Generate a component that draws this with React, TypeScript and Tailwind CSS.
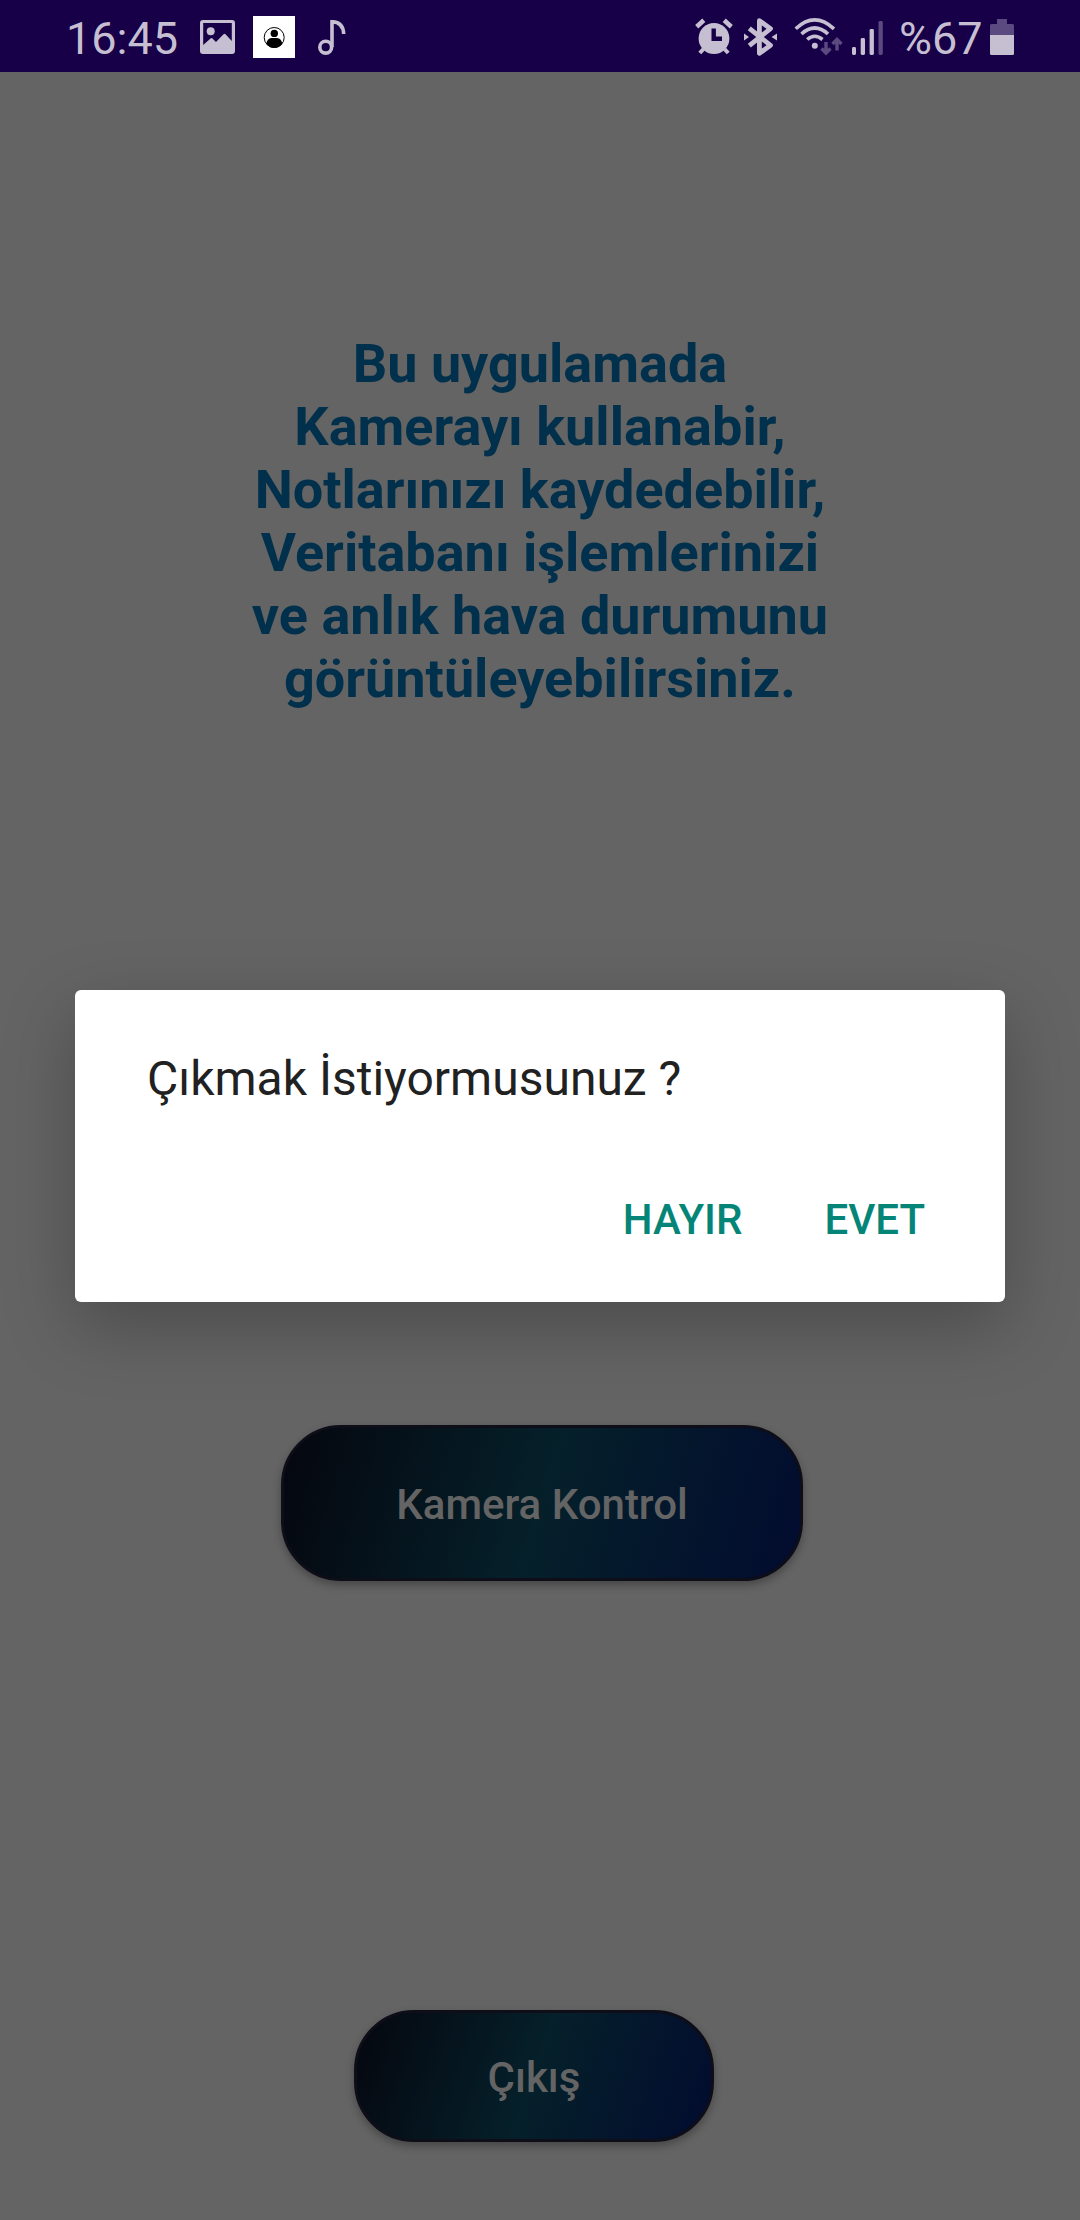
const LIGHT = '#c5bfd1';
const DIM = '#5b4a80';

function PictureIcon() {
  return (
    <svg className="ml-[23px] mt-5 h-[34px] w-[35px]" viewBox="0 0 35 34" aria-hidden="true">
      <path
        fill={LIGHT}
        fillRule="evenodd"
        d="M3 0H32Q35 0 35 3V31Q35 34 32 34H3Q0 34 0 31V3Q0 0 3 0ZM3.2 3V25L10.5 18.5Q11.5 17.6 12.5 18.5L16 22L23.5 14.2Q24.5 13.2 25.5 14.2L31.8 21V3Z"
      />
      <circle cx="10.7" cy="11.2" r="4" fill={LIGHT} />
    </svg>
  );
}

function PersonIcon() {
  return (
    <svg className="ml-[18px] mt-4 size-[42px]" viewBox="0 0 42 42" aria-hidden="true">
      <path fill="#fff" d="M0 0H42V42H0Z" />
      <circle cx="21.2" cy="21.5" r="10" fill="#fff" stroke="#000" strokeWidth="1" />
      <circle cx="21.3" cy="17.4" r="3.7" />
      <path d="M13.3 28Q14 22.5 18.5 22H24Q28.6 22.5 29.3 28Q26 32 21.3 32T13.3 28Z" />
    </svg>
  );
}

function NoteIcon() {
  return (
    <svg className="ml-[23px] mt-5 h-[35px] w-[28px]" viewBox="0 0 28 35" fill="none" stroke={LIGHT} aria-hidden="true">
      <circle cx="7.7" cy="27.2" r="5.9" strokeWidth="3.6" />
      <path d="M14 27V1.7Q25.2 2 25.7 14" strokeWidth="3.6" />
    </svg>
  );
}

function AlarmIcon() {
  return (
    <svg className="ml-auto mt-[18px] h-[37px] w-[38px]" viewBox="0 0 38 37" aria-hidden="true">
      <circle cx="19" cy="20.5" r="15.4" fill={LIGHT} />
      <path d="M1.7 8.7L8.8 2.3M29.2 2.3L36.3 8.7" stroke={LIGHT} strokeWidth="4.6" />
      <path d="M8.5 31L4.8 35M29.5 31L33.2 35" stroke={LIGHT} strokeWidth="4" />
      <path d="M18.7 10.5V20.7H27" stroke="#170048" strokeWidth="4.4" fill="none" />
    </svg>
  );
}

function BluetoothIcon() {
  return (
    <svg className="ml-[10px] mt-[18px] h-[38px] w-[35px]" viewBox="0 0 35 38" aria-hidden="true">
      <path
        d="M6.3 10.3L27.5 27.3L16.4 35.3V2.7L27.5 10.7L6.3 27.7"
        fill="none"
        stroke={LIGHT}
        strokeWidth="4.8"
        strokeLinejoin="round"
      />
      <path d="M1 15.5V22.5L6 19ZM34 15.5V22.5L28.5 19Z" fill={LIGHT} />
    </svg>
  );
}

function WifiIcon() {
  return (
    <svg className="ml-4 mt-[18px] h-[38px] w-[49px]" viewBox="0 0 49 38" fill="none" aria-hidden="true">
      <path
        d="M1.7 10.8Q20.5 -7 40 10.8M7.5 16Q20.7 4 34 16M13.2 21.5Q20.7 15 28.5 21.5"
        stroke={LIGHT}
        strokeWidth="3.6"
      />
      <circle cx="20.8" cy="27.8" r="3" fill={LIGHT} />
      <path
        d="M32 24V34.5M27.5 30.5L32 35L36.5 30.5M43 32.5V22M38.5 26L43 21.5L47.5 26"
        stroke={DIM}
        strokeWidth="3.4"
      />
    </svg>
  );
}

function SignalIcon() {
  return (
    <svg className="ml-[9px] mt-[21px] h-[34px] w-[31px]" viewBox="0 0 31 34" fill={LIGHT} aria-hidden="true">
      <rect y="26" width="4" height="8" rx="1.4" />
      <rect x="8.7" y="17" width="4.3" height="17" rx="1.4" />
      <rect x="17.6" y="8" width="4.3" height="26" rx="1.4" />
      <rect x="26.5" y="0" width="4.3" height="34" rx="1.4" fill={DIM} />
    </svg>
  );
}

function BatteryIcon() {
  return (
    <svg className="ml-[8px] mt-[19px] h-9 w-6" viewBox="0 0 24 36" aria-hidden="true">
      <path d="M7 0H17V5H22.5Q24 5 24 6.5V17H0V6.5Q0 5 1.5 5H7Z" fill={DIM} />
      <path d="M0 16H24V34.5Q24 36 22.5 36H1.5Q0 36 0 34.5Z" fill={LIGHT} />
    </svg>
  );
}

function StatusBar() {
  return (
    <header className="flex h-[72px] items-start bg-[#170048] pl-[66px] pr-[66px] text-[45px] leading-[53px] text-[#c5bfd1]">
      <span className="mt-3 w-[111px] whitespace-nowrap">16:45</span>
      <PictureIcon />
      <PersonIcon />
      <NoteIcon />
      <AlarmIcon />
      <BluetoothIcon />
      <WifiIcon />
      <SignalIcon />
      <span className="ml-4 mt-3 w-[83px] whitespace-nowrap">%67</span>
      <BatteryIcon />
    </header>
  );
}

const introLines = [
  'Bu uygulamada',
  'Kamerayı kullanabir,',
  'Notlarınızı kaydedebilir,',
  'Veritabanı işlemlerinizi',
  've anlık hava durumunu',
  'görüntüleyebilirsiniz.',
];

export default function App() {
  return (
    <div className="relative flex h-[2220px] w-[1080px] flex-col overflow-hidden bg-[#646464] font-['Roboto',sans-serif]">
      <StatusBar />
      <main className="flex flex-col items-center">
        <p className="mt-[260px] text-center text-[54px] font-bold leading-[63px] text-[#00304b]">
          {introLines.map((line) => (
            <span key={line} className="block whitespace-nowrap">
              {line}
            </span>
          ))}
        </p>
        <button className="ml-1 mt-[715px] h-[156px] w-[522px] rounded-[60px] border-[3px] border-[#0d0e17] bg-[linear-gradient(106.6deg,#05060e,#05202a_50%,#020b2f)] bg-origin-border pt-0.5 text-[42px] font-medium text-[#646464] shadow-[0_4px_8px_rgba(0,0,0,0.3)]">
          Kamera Kontrol
        </button>
        <button className="mr-3 mt-[429px] h-[132px] w-[360px] rounded-[60px] border-[3px] border-[#0d0e17] bg-[linear-gradient(110deg,#05060e,#05202a_50%,#020b2f)] bg-origin-border pt-0.5 text-[42px] font-medium text-[#646464] shadow-[0_4px_8px_rgba(0,0,0,0.3)]">
          Çıkış
        </button>
      </main>
      <section
        role="dialog"
        className="absolute left-[75px] top-[990px] flex h-[312px] w-[930px] flex-col rounded-md bg-white shadow-[0_24px_70px_rgba(0,0,0,0.25)]"
      >
        <p className="ml-[72px] mt-[61px] text-[48px] leading-[56px] text-[#212121]">Çıkmak İstiyormusunuz ?</p>
        <div className="mr-[80px] mt-[88px] flex justify-end gap-[82px] text-[42px] font-medium leading-[50px] text-[#048577]">
          <button>HAYIR</button>
          <button>EVET</button>
        </div>
      </section>
    </div>
  );
}
